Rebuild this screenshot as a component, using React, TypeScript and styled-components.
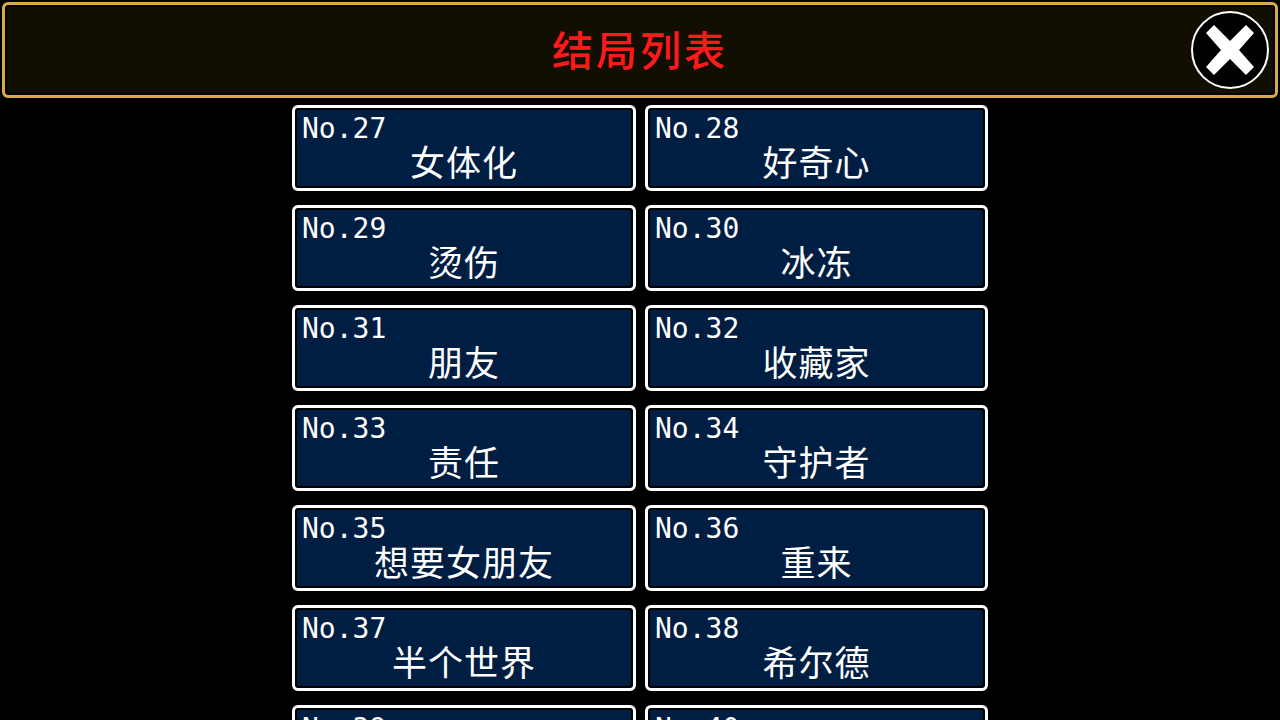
import React from 'react';
import styled, { createGlobalStyle } from 'styled-components';

const endings = [
  { no: 27, name: '女体化' },
  { no: 28, name: '好奇心' },
  { no: 29, name: '烫伤' },
  { no: 30, name: '冰冻' },
  { no: 31, name: '朋友' },
  { no: 32, name: '收藏家' },
  { no: 33, name: '责任' },
  { no: 34, name: '守护者' },
  { no: 35, name: '想要女朋友' },
  { no: 36, name: '重来' },
  { no: 37, name: '半个世界' },
  { no: 38, name: '希尔德' },
  { no: 39, name: '' },
  { no: 40, name: '' },
];

export default function App() {
  return (
    <>
      <GlobalStyle />
      <Screen>
        <Header>
          <HeaderTitle>结局列表</HeaderTitle>
          <CloseButton aria-label="close">
            <svg width="78" height="78" viewBox="0 0 78 78">
              <circle cx="39" cy="39" r="38" fill="#000" stroke="#fff" strokeWidth="2" />
              <path d="M23 14 L39 30 L55 14 L63 22 L48 39 L63 56 L55 64 L39 48 L23 64 L15 56 L30 39 L15 22 Z" fill="#fff" />
            </svg>
          </CloseButton>
        </Header>
        <EndingGrid>
          {endings.map((e) => (
            <EndingCard key={e.no}>
              <EndingNo>No.{e.no}</EndingNo>
              <EndingName>{e.name}</EndingName>
            </EndingCard>
          ))}
        </EndingGrid>
      </Screen>
    </>
  );
}

const GlobalStyle = createGlobalStyle`
  html, body {
    margin: 0;
    padding: 0;
    height: 100%;
    background: #000;
    overflow: hidden;
  }
`;

const Screen = styled.div`
  width: 1280px;
  height: 720px;
  overflow: hidden;
  box-sizing: border-box;
  padding: 2px 2px 0;
  background: #000;
  font-family: "DejaVu Sans Mono", "Noto Sans CJK SC", monospace;
`;

const Header = styled.header`
  position: relative;
  box-sizing: border-box;
  height: 96px;
  display: flex;
  align-items: center;
  justify-content: center;
  padding-bottom: 4px;
  background: #130e02;
  border: 3px solid #d9a94b;
  border-radius: 6px;
  box-shadow: inset 0 0 0 2px #000;
`;

const HeaderTitle = styled.h1`
  margin: 0;
  font-family: "Noto Sans CJK SC", sans-serif;
  font-size: 41px;
  font-weight: 500;
  letter-spacing: 3px;
  line-height: 1;
  color: #ff1a1a;
`;

const CloseButton = styled.button`
  position: absolute;
  top: 6px;
  right: 6px;
  width: 78px;
  height: 78px;
  padding: 0;
  border: 0;
  background: none;
  display: flex;
`;

const EndingGrid = styled.div`
  display: grid;
  grid-template-columns: 344px 343px;
  grid-auto-rows: 86px;
  column-gap: 9px;
  row-gap: 14px;
  justify-content: center;
  margin-top: 7px;
`;

const EndingCard = styled.div`
  box-sizing: border-box;
  display: flex;
  flex-direction: column;
  padding: 7px 7px 0;
  background: #001d42;
  border: 3px solid #fff;
  border-radius: 6px;
  box-shadow: inset 0 0 0 2px #000;
  color: #fff;
`;

const EndingNo = styled.div`
  font-size: 28px;
  line-height: 28px;
`;

const EndingName = styled.div`
  margin-top: 1px;
  font-family: "Noto Sans CJK SC", sans-serif;
  font-size: 35px;
  font-weight: 400;
  letter-spacing: 1px;
  line-height: 34px;
  text-align: center;
`;
